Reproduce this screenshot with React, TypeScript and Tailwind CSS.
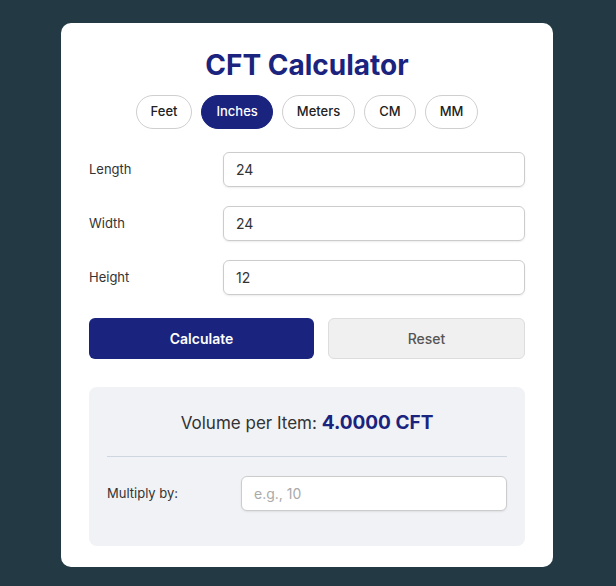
import React, { useState } from "react";

const units = ["Feet", "Inches", "Meters", "CM", "MM"];

export default function App() {
  const [unit, setUnit] = useState("Inches");
  const [dims, setDims] = useState({ length: "24", width: "24", height: "12" });
  const [multiply, setMultiply] = useState("");

  const fields: { key: "length" | "width" | "height"; label: string }[] = [
    { key: "length", label: "Length" },
    { key: "width", label: "Width" },
    { key: "height", label: "Height" },
  ];

  return (
    <div
      className="min-h-screen bg-[#233a45] flex pl-[61px] pt-[23px]"
      style={{ fontFamily: "Inter, 'Open Sans', sans-serif" }}
    >
      <div className="w-[492px] h-[544px] bg-white rounded-[10px] px-[28px] pt-[25px]">
        <h1 className="text-center text-[28px] leading-[34px] font-bold text-[#1a237e]">
          CFT Calculator
        </h1>

        <div className="mt-[13px] flex justify-center gap-[9px]">
          {units.map((u) => (
            <button
              key={u}
              onClick={() => setUnit(u)}
              className={
                u === unit
                  ? "h-[34px] px-[14px] rounded-full text-[13px] font-medium bg-[#1a237e] text-white border border-[#1a237e]"
                  : "h-[34px] px-[14px] rounded-full text-[13px] font-medium bg-white text-[#222] border border-[#cfcfcf]"
              }
            >
              {u}
            </button>
          ))}
        </div>

        <div className="mt-[23px] flex flex-col gap-[19px]">
          {fields.map((f) => (
            <div key={f.key} className="flex items-center">
              <label className="w-[134px] text-[13px] text-[#333]">{f.label}</label>
              <input
                value={dims[f.key]}
                onChange={(e) => setDims({ ...dims, [f.key]: e.target.value })}
                className="flex-1 h-[35px] rounded-[6px] border border-[#cccccc] px-[12px] text-[14px] text-[#333] shadow-[0_1px_2px_rgba(0,0,0,0.08)] outline-none"
              />
            </div>
          ))}
        </div>

        <div className="mt-[23px] flex gap-[14px]">
          <button className="w-[225px] h-[41px] rounded-[6px] bg-[#1a237e] text-white text-[14px] font-semibold">
            Calculate
          </button>
          <button className="flex-1 h-[41px] rounded-[6px] bg-[#f0f0f0] border border-[#dddddd] text-[#555] text-[14px] font-medium">
            Reset
          </button>
        </div>

        <div className="mt-[28px] bg-[#f0f2f5] rounded-[8px] px-[18px] pt-[22px] pb-[35px]">
          <p className="text-center text-[17px] leading-[27px] text-[#333]">
            Volume per Item:{" "}
            <span className="text-[19px] font-bold text-[#1a237e]">4.0000 CFT</span>
          </p>
          <div className="mt-[19px] border-t border-[#cfd6e0]" />
          <div className="mt-[19px] flex items-center">
            <label className="w-[134px] text-[13px] text-[#333]">Multiply by:</label>
            <input
              value={multiply}
              onChange={(e) => setMultiply(e.target.value)}
              placeholder="e.g., 10"
              className="flex-1 h-[35px] rounded-[6px] border border-[#cccccc] bg-white px-[12px] text-[14px] text-[#333] placeholder:text-[#aaaaaa] shadow-[0_1px_2px_rgba(0,0,0,0.08)] outline-none"
            />
          </div>
        </div>
      </div>
    </div>
  );
}
